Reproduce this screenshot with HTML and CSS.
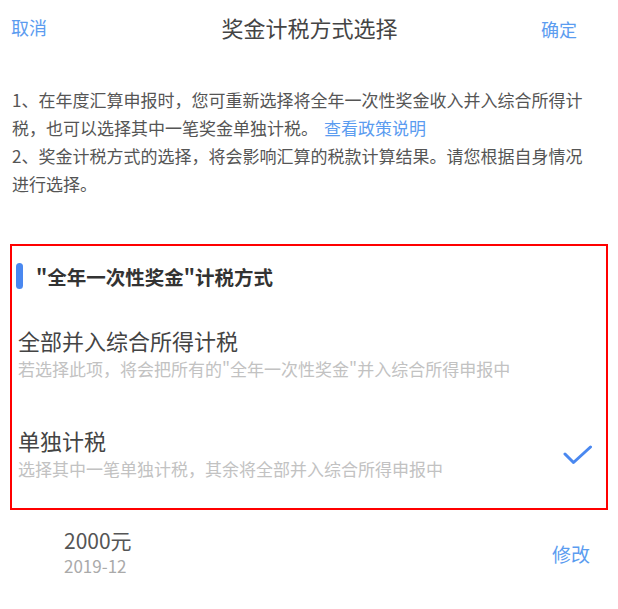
FILE: index.html
```html
<!DOCTYPE html>
<html lang="zh-CN">
<head>
  <meta charset="UTF-8" />
  <meta name="viewport" content="width=device-width, initial-scale=1.0"/>
  <title>奖金计税方式选择</title>
  <link rel="stylesheet" href="styles.css">
</head>
<body>

  <div class="topbar">
    <a class="action cancel">取消</a>
    <h1>奖金计税方式选择</h1>
    <a class="action confirm">确定</a>
  </div>

  <div class="intro">
    <p>1、在年度汇算申报时，您可重新选择将全年一次性奖金收入并入综合所得计税，也可以选择其中一笔奖金单独计税。<a class="link">查看政策说明</a></p>
    <p>2、奖金计税方式的选择，将会影响汇算的税款计算结果。请您根据自身情况进行选择。</p>
  </div>

  <div class="choice-box">
    <div class="section-title">
      <span class="bar"></span>
      <h2>"全年一次性奖金"计税方式</h2>
    </div>

    <div class="option">
      <div class="option-text">
        <div class="option-name">全部并入综合所得计税</div>
        <div class="option-desc">若选择此项，将会把所有的"全年一次性奖金"并入综合所得申报中</div>
      </div>
    </div>

    <div class="option selected">
      <div class="option-text">
        <div class="option-name">单独计税</div>
        <div class="option-desc">选择其中一笔单独计税，其余将全部并入综合所得申报中</div>
      </div>
      <svg class="check" width="30" height="22" viewBox="0 0 30 22">
        <path d="M2 9 L10.5 17.5 L27.5 2" fill="none" stroke="#4a88f0" stroke-width="3" stroke-linecap="round" stroke-linejoin="round"/>
      </svg>
    </div>
  </div>

  <div class="bonus-row">
    <div>
      <div class="amount">2000元</div>
      <div class="month">2019-12</div>
    </div>
    <a class="action edit">修改</a>
  </div>

</body>
</html>
```

FILE: styles.css
```css
body {
  margin: 0;
  padding: 0;
  font-family: "Noto Sans CJK SC", "Noto Sans", sans-serif;
  background: #fff;
  color: #555;
}

.topbar {
  height: 54px;
  display: grid;
  grid-template-columns: 1fr auto 1fr;
  align-items: center;
  padding: 0 10px 0 11px;
}

.topbar h1 {
  margin: 0;
  font-size: 22px;
  font-weight: normal;
  color: #444;
}

.action {
  font-size: 18px;
  color: #5b9cf0;
}

.cancel {
  justify-self: start;
}

.confirm {
  justify-self: end;
  padding-top: 3px;
  padding-right: 31px;
}

.intro {
  padding: 32px 20px 0 12px;
  font-size: 17px;
  line-height: 28px;
  color: #555;
}

.intro p {
  margin: 0;
}

.link {
  margin-left: 6px;
  color: #5b9cf0;
}

.choice-box {
  margin: 46px 10px 0;
  border: 2px solid #f00;
  padding-bottom: 4px;
}

.section-title {
  display: flex;
  align-items: center;
  padding: 17px 0 0 4px;
  height: 26px;
}

.bar {
  width: 7px;
  height: 26px;
  border-radius: 4px;
  background: #4a88f0;
}

.section-title h2 {
  margin: 0 0 0 13px;
  font-size: 19.5px;
  color: #333;
}

.option {
  display: flex;
  align-items: center;
  justify-content: space-between;
  padding: 21px 13px 21px 6px;
}

.section-title + .option {
  margin-top: 15px;
}

.option-name {
  font-size: 22px;
  line-height: 30px;
  color: #444;
}

.option-desc {
  font-size: 17px;
  line-height: 28px;
  color: #c2c2c2;
}

.check {
  margin-top: 4px;
}

.bonus-row {
  display: flex;
  justify-content: space-between;
  align-items: center;
  padding: 16px 28px 0 64px;
}

.amount {
  font-size: 21px;
  line-height: 28px;
  color: #555;
}

.month {
  font-size: 17px;
  line-height: 24px;
  color: #aaa;
}

.edit {
  font-size: 19px;
  padding-top: 2px;
}
```
